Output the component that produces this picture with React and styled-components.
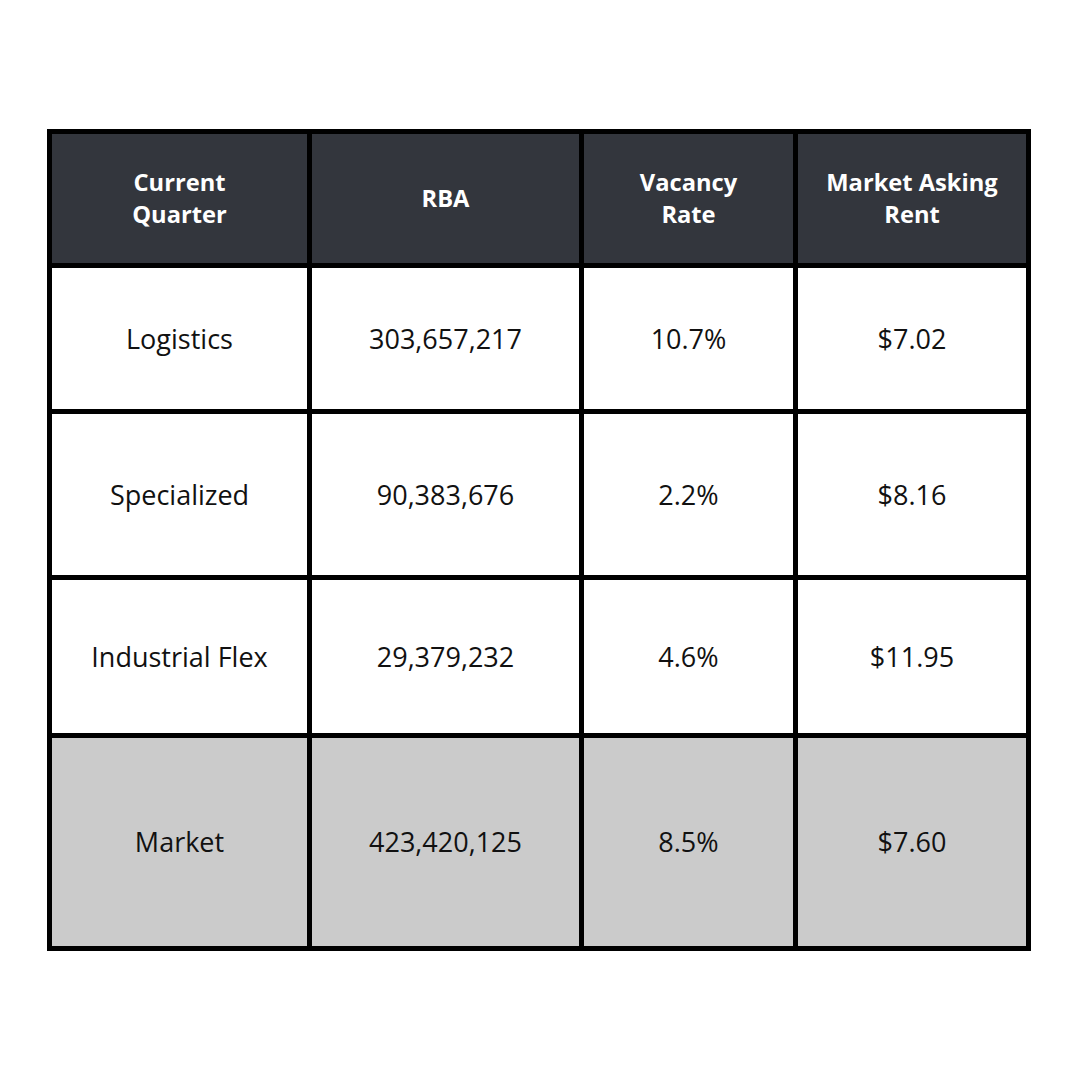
import React from "react";
import styled, { createGlobalStyle } from "styled-components";

const Global = createGlobalStyle`
  html, body { margin: 0; padding: 0; background: #ffffff; }
  body { font-family: "Open Sans", "Noto Sans", sans-serif; }
`;

const Page = styled.div`
  width: 1080px;
  height: 1080px;
  padding: 129px 0 0 47px;
  box-sizing: border-box;
`;

const Table = styled.div`
  display: grid;
  grid-template-columns: 255px 267px 209px 228px;
  grid-template-rows: 129px 141px 161px 153px 208px;
  gap: 5px;
  padding: 5px;
  width: 984px;
  box-sizing: border-box;
  background: #000000;
`;

const Cell = styled.div`
  display: flex;
  align-items: center;
  justify-content: center;
  text-align: center;
  background: ${(p) => (p.$head ? "#33363d" : p.$total ? "#cbcbcb" : "#ffffff")};
  color: ${(p) => (p.$head ? "#ffffff" : "#111111")};
  font-weight: ${(p) => (p.$head ? 700 : 400)};
  font-size: ${(p) => (p.$head ? "23.7px" : "27px")};
  line-height: ${(p) => (p.$head ? "31.5px" : "36px")};
  padding: ${(p) => (p.$head ? "0 12px" : "0 6px")};
`;

const headers = ["Current\nQuarter", "RBA", "Vacancy\nRate", "Market Asking\nRent"];
const rows = [
  ["Logistics", "303,657,217", "10.7%", "$7.02"],
  ["Specialized", "90,383,676", "2.2%", "$8.16"],
  ["Industrial Flex", "29,379,232", "4.6%", "$11.95"],
];
const total = ["Market", "423,420,125", "8.5%", "$7.60"];

const Lines = ({ text }) =>
  text.split("\n").map((t, i) => (
    <React.Fragment key={i}>
      {i > 0 && <br />}
      {t}
    </React.Fragment>
  ));

export default function App() {
  return (
    <>
      <Global />
      <Page>
        <Table>
          {headers.map((h) => (
            <Cell $head key={h}>
              <span>
                <Lines text={h} />
              </span>
            </Cell>
          ))}
          {rows.map((r) =>
            r.map((v, i) => <Cell key={r[0] + i}>{v}</Cell>)
          )}
          {total.map((v, i) => (
            <Cell $total key={"t" + i}>
              {v}
            </Cell>
          ))}
        </Table>
      </Page>
    </>
  );
}
